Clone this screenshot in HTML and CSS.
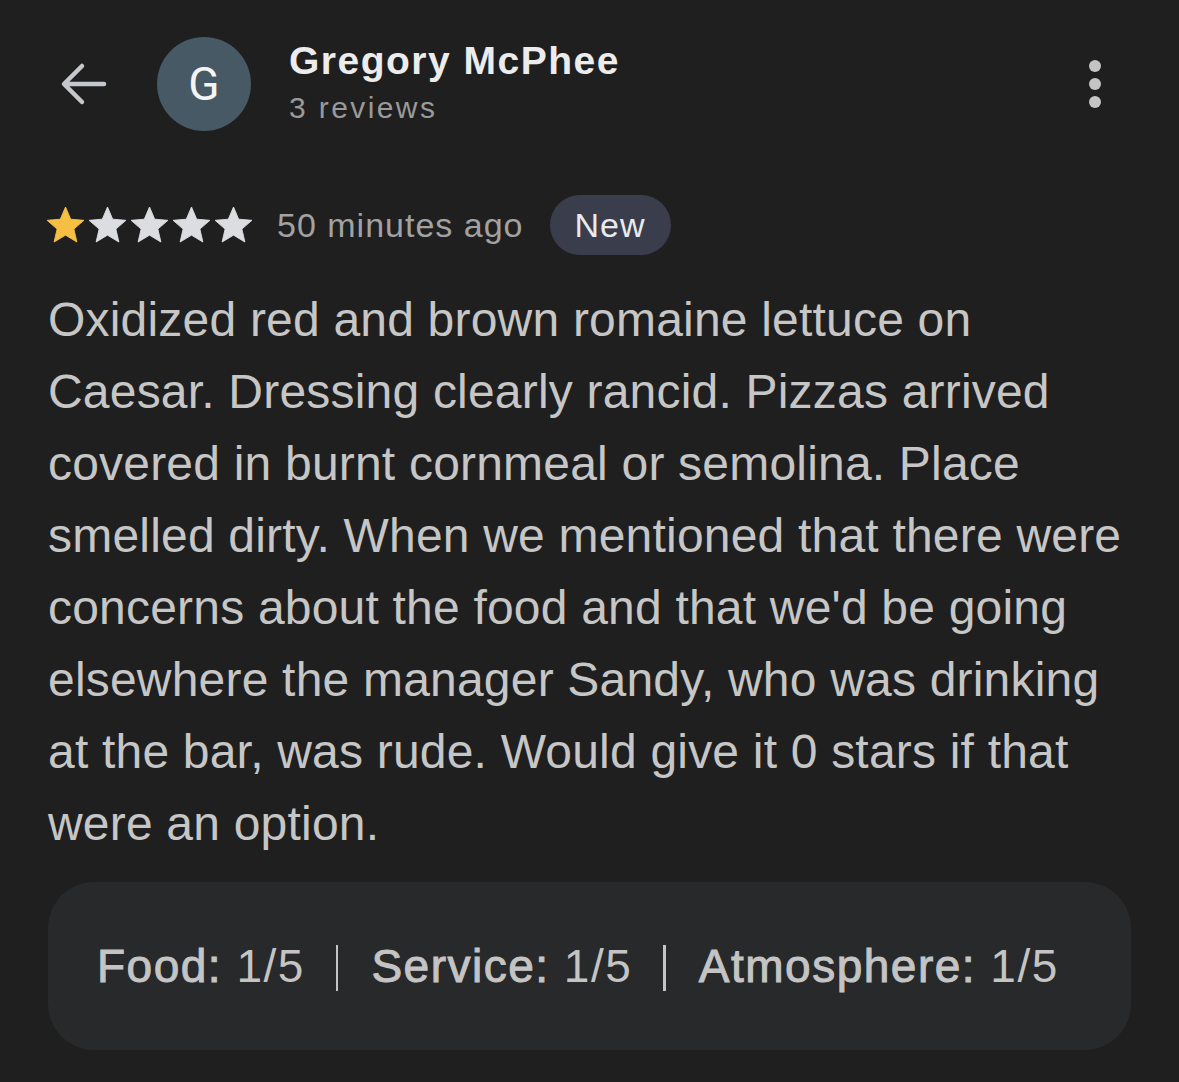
FILE: index.html
```html
<!DOCTYPE html>
<html>
<head>
<meta charset="utf-8">
<link rel="stylesheet" href="styles.css">
</head>
<body>
<div class="page">
  <header class="top">
    <div class="back">
      <svg width="52" height="52" viewBox="0 0 52 52"><path d="M47 26H8M25 8L7 26L25 44" fill="none" stroke="#c4c7cc" stroke-width="4.5" stroke-linecap="round" stroke-linejoin="round"/></svg>
    </div>
    <div class="avatar">G</div>
    <div class="who">
      <div class="name">Gregory McPhee</div>
      <div class="count">3 reviews</div>
    </div>
    <div class="more">
      <span class="dot"></span><span class="dot"></span><span class="dot"></span>
    </div>
  </header>
  <div class="meta">
    <div class="stars">
      <svg class="star on" viewBox="2 2 20 19"><path d="M12 17.27L18.18 21l-1.64-7.03L22 9.24l-7.19-.61L12 2 9.19 8.63 2 9.24l5.46 4.73L5.82 21z"/></svg>
      <svg class="star" viewBox="2 2 20 19"><path d="M12 17.27L18.18 21l-1.64-7.03L22 9.24l-7.19-.61L12 2 9.19 8.63 2 9.24l5.46 4.73L5.82 21z"/></svg>
      <svg class="star" viewBox="2 2 20 19"><path d="M12 17.27L18.18 21l-1.64-7.03L22 9.24l-7.19-.61L12 2 9.19 8.63 2 9.24l5.46 4.73L5.82 21z"/></svg>
      <svg class="star" viewBox="2 2 20 19"><path d="M12 17.27L18.18 21l-1.64-7.03L22 9.24l-7.19-.61L12 2 9.19 8.63 2 9.24l5.46 4.73L5.82 21z"/></svg>
      <svg class="star" viewBox="2 2 20 19"><path d="M12 17.27L18.18 21l-1.64-7.03L22 9.24l-7.19-.61L12 2 9.19 8.63 2 9.24l5.46 4.73L5.82 21z"/></svg>
    </div>
    <span class="ago">50 minutes ago</span>
    <span class="pill">New</span>
  </div>
  <p class="body">Oxidized red and brown romaine lettuce on Caesar. Dressing clearly rancid. Pizzas arrived covered in burnt cornmeal or semolina. Place smelled dirty. When we mentioned that there were concerns about the food and that we'd be going elsewhere the manager Sandy, who was drinking at the bar, was rude. Would give it 0 stars if that were an option.</p>
  <div class="ratings">
    <span class="item"><span class="label">Food:</span> 1/5</span>
    <span class="sep"></span>
    <span class="item"><span class="label">Service:</span> 1/5</span>
    <span class="sep"></span>
    <span class="item"><span class="label">Atmosphere:</span> 1/5</span>
  </div>
</div>
</body>
</html>
```

FILE: styles.css
```css
html, body {
  margin: 0;
  padding: 0;
  background: #1f1f1f;
}
body {
  font-family: "Liberation Sans", Arial, sans-serif;
  color: #c4c4c4;
  width: 1179px;
  height: 1082px;
  overflow: hidden;
}
.page {
  padding: 37px 48px 0 48px;
}
.top {
  display: flex;
  align-items: flex-start;
  height: 94px;
}
.back {
  width: 52px;
  height: 52px;
  margin-left: 9px;
  margin-right: 48px;
  margin-top: 21px;
  display: flex;
}
.avatar {
  width: 94px;
  height: 94px;
  border-radius: 50%;
  background: #475964;
  color: #f4f4f4;
  font-family: Roboto, "Liberation Sans", sans-serif;
  font-size: 46px;
  display: flex;
  align-items: center;
  justify-content: center;
}
.who {
  margin-left: 38px;
  margin-top: 1px;
  flex: 1;
}
.name {
  font-weight: bold;
  font-size: 39px;
  letter-spacing: 1.5px;
  color: #ececec;
  line-height: 46px;
}
.count {
  margin-top: 5px;
  font-size: 30px;
  letter-spacing: 2.4px;
  color: #9a9a9a;
  line-height: 38px;
}
.more {
  display: flex;
  flex-direction: column;
  gap: 6px;
  margin-top: 23px;
  margin-right: 30px;
}
.dot {
  width: 12px;
  height: 12px;
  border-radius: 50%;
  background: #c4c4c4;
}
.meta {
  display: flex;
  align-items: center;
  margin-top: 64px;
  height: 60px;
}
.stars {
  display: flex;
  gap: 5px;
  margin-left: -1px;
  margin-top: -1px;
}
.star {
  width: 37px;
  height: 35px;
  overflow: visible;
  fill: #dcdde0;
  stroke: #dcdde0;
  stroke-width: 0.5;
  stroke-linejoin: round;
}
.star.on {
  fill: #f4bf42;
  stroke: #f4bf42;
}
.ago {
  font-size: 34px;
  letter-spacing: 1px;
  color: #a2a2a2;
  margin-left: 25px;
}
.pill {
  margin-left: 26px;
  background: #3a3e4c;
  color: #eaeaec;
  font-size: 34px;
  letter-spacing: 1px;
  height: 60px;
  padding: 0 25px;
  border-radius: 30px;
  display: flex;
  align-items: center;
}
.body {
  margin: 29px 0 0 0;
  font-size: 48px;
  letter-spacing: 0.2px;
  line-height: 72px;
  color: #c6c6c6;
  width: 1083px;
}
.ratings {
  margin-top: 22px;
  width: 1083px;
  height: 168px;
  box-sizing: border-box;
  background: #28292b;
  border-radius: 46px;
  display: flex;
  align-items: center;
  padding-left: 49px;
  font-size: 46px;
  letter-spacing: 1.5px;
  color: #c4c4c4;
}
.label {
  -webkit-text-stroke: 1px #c4c4c4;
}
.sep {
  width: 2.5px;
  height: 46px;
  background: #c4c4c4;
  margin: 4px 33px 0 31px;
}
```
